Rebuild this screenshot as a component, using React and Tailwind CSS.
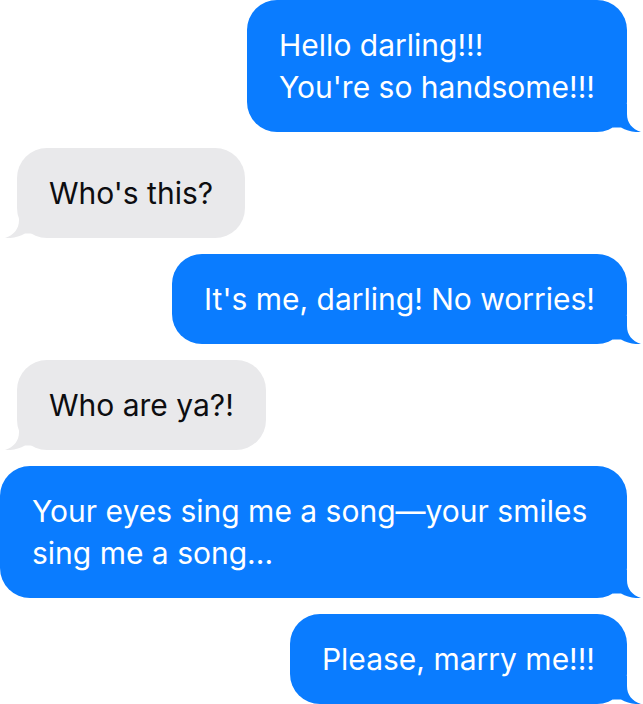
import React from "react";

const messages = [
  { from: "me", text: ["Hello darling!!!", "You're so handsome!!!"] },
  { from: "them", text: ["Who's this?"] },
  { from: "me", text: ["It's me, darling! No worries!"] },
  { from: "them", text: ["Who are ya?!"] },
  { from: "me", text: ["Your eyes sing me a song\u2014your smiles sing me a song..."] },
  { from: "me", text: ["Please, marry me!!!"] },
];

// little curled tail under the bubble corner
function Tail({ color, flip }) {
  return (
    <svg
      width="30"
      height="28"
      viewBox="0 0 30 28"
      className={
        flip
          ? "absolute bottom-0 left-[-14px] -scale-x-100"
          : "absolute bottom-0 right-[-16px]"
      }
    >
      <path
        d="M0,0 H14 V10 C14,19 19,25 28,28 C21,28.5 14,27 8,23.5 L0,23.5 Z"
        fill={color}
      />
    </svg>
  );
}

function Bubble({ from, text }) {
  const mine = from === "me";
  return (
    <div
      className={
        mine
          ? "relative self-end mr-4 max-w-[627px] rounded-[30px] bg-[#0a7cff] px-8 py-6 text-white"
          : "relative self-start ml-[17px] rounded-[30px] bg-[#e9e9eb] px-8 py-6 text-[#0d0d10]"
      }
    >
      {text.map((line, i) => (
        <p key={i}>{line}</p>
      ))}
      <Tail color={mine ? "#0a7cff" : "#e9e9eb"} flip={!mine} />
    </div>
  );
}

export default function App() {
  return (
    <div className="flex w-[643px] flex-col gap-4 bg-white font-['Inter',sans-serif] text-[30px] leading-[42px]">
      {messages.map((m, i) => (
        <Bubble key={i} {...m} />
      ))}
    </div>
  );
}
